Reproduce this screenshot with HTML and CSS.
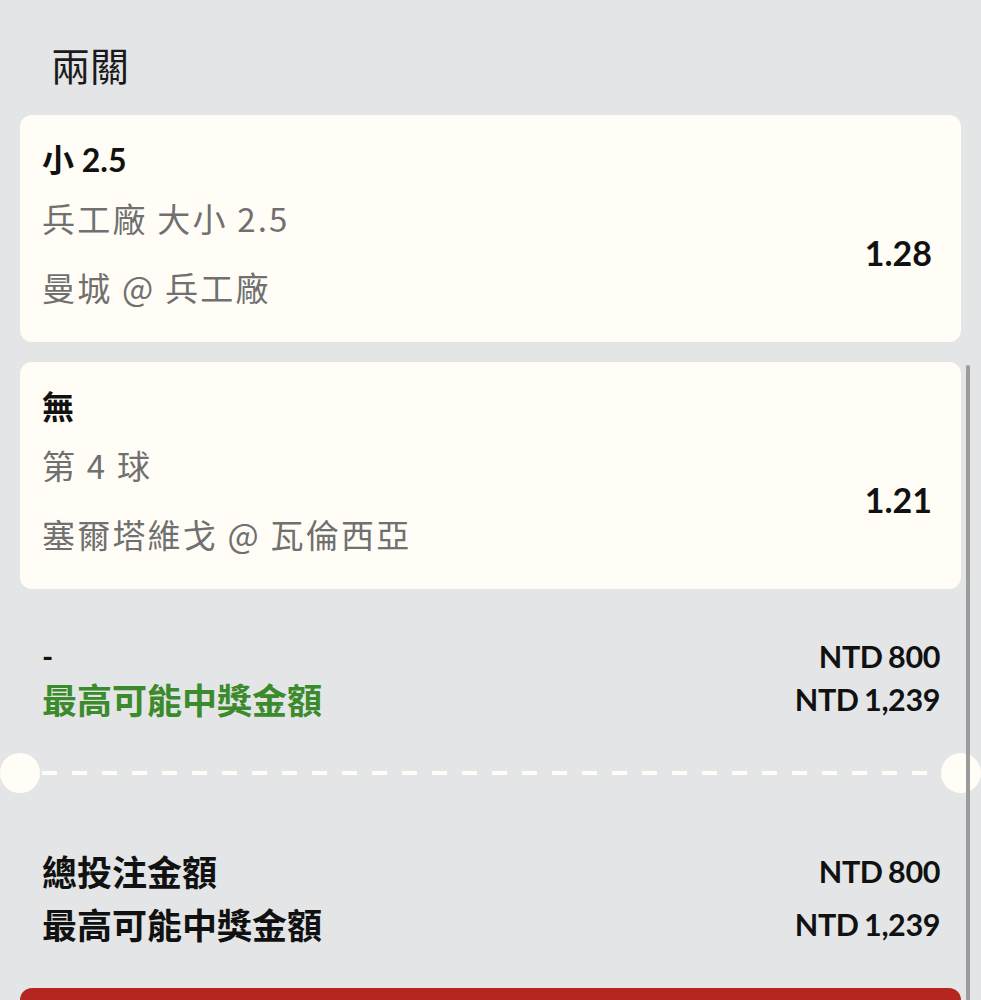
FILE: index.html
```html
<!DOCTYPE html>
<html lang="zh-Hant">
<head>
<meta charset="utf-8">
<title>兩關</title>
<link rel="stylesheet" href="styles.css">
</head>
<body>
<div class="page">
  <h1 class="title">兩關</h1>
  <div class="card">
    <div class="card-title">小 2.5</div>
    <div class="card-body">
      <div class="card-lines">
        <div class="line">兵工廠 大小 2.5</div>
        <div class="line">曼城 @ 兵工廠</div>
      </div>
      <div class="odds">1.28</div>
    </div>
  </div>
  <div class="card">
    <div class="card-title">無</div>
    <div class="card-body">
      <div class="card-lines">
        <div class="line">第 4 球</div>
        <div class="line">塞爾塔維戈 @ 瓦倫西亞</div>
      </div>
      <div class="odds">1.21</div>
    </div>
  </div>
  <div class="summary summary-top">
    <div class="row"><span class="label dash">-</span><span class="amount">NTD 800</span></div>
    <div class="row"><span class="label green">最高可能中獎金額</span><span class="amount">NTD 1,239</span></div>
  </div>
  <div class="divider">
    <span class="notch"></span>
    <span class="dashes"></span>
    <span class="notch"></span>
  </div>
  <div class="summary summary-bottom">
    <div class="row"><span class="label">總投注金額</span><span class="amount">NTD 800</span></div>
    <div class="row"><span class="label">最高可能中獎金額</span><span class="amount">NTD 1,239</span></div>
  </div>
  <div class="button"></div>
</div>
<div class="scrollbar"></div>
</body>
</html>
```
FILE: styles.css
```css
html, body {
  margin: 0;
  padding: 0;
  background: #e4e5e7;
  overflow: hidden;
  height: 1000px;
}
body {
  font-family: "Lato", "Noto Sans CJK TC", sans-serif;
  color: #111;
  position: relative;
}
.page {
  padding: 0 20px;
}
.title {
  margin: 0;
  padding: 36px 0 0 31px;
  font-family: "Noto Sans CJK TC", sans-serif;
  font-weight: 400;
  font-size: 39px;
  line-height: 56px;
  height: 79px;
  color: #1a1a1a;
}
.card {
  background: #fffdf5;
  border-radius: 12px;
  padding: 23px 29px 25px 22px;
}
.card + .card {
  margin-top: 20px;
}
.card-title {
  font-weight: 700;
  font-size: 32px;
  line-height: 44px;
  color: #111;
}
.card-body {
  display: flex;
  align-items: center;
  justify-content: space-between;
  margin-top: 6px;
}
.card-lines {
  display: flex;
  flex-direction: column;
  gap: 9px;
}
.line {
  font-family: "Noto Sans CJK TC", sans-serif;
  font-weight: 400;
  font-size: 33px;
  letter-spacing: 2.2px;
  line-height: 60px;
  color: #707070;
}
.odds {
  font-weight: 700;
  font-size: 34px;
  color: #111;
}
.summary {
  padding: 0 21px 0 22px;
}
.summary-top {
  margin-top: 45px;
}
.summary-top .row {
  height: 43px;
}
.summary-bottom {
  margin-top: 51px;
}
.summary-bottom .row {
  height: 53px;
}
.row {
  display: flex;
  justify-content: space-between;
  align-items: center;
}
.label {
  font-family: "Noto Sans CJK TC", sans-serif;
  font-weight: 700;
  font-size: 35px;
  color: #111;
}
.label.dash {
  font-family: "Lato", sans-serif;
  font-size: 30px;
}
.label.green {
  color: #3b8a2c;
}
.amount {
  font-weight: 700;
  font-size: 30.5px;
  letter-spacing: -0.4px;
  word-spacing: -1.5px;
  color: #111;
}
.divider {
  display: flex;
  align-items: center;
  margin: 33px -20px 0;
  height: 40px;
}
.notch {
  width: 40px;
  height: 40px;
  border-radius: 50%;
  background: #fffdf5;
  flex: none;
}
.dashes {
  flex: 1;
  height: 4px;
  margin: 0 2px;
  background: repeating-linear-gradient(90deg, #fffdf5 0 15px, transparent 15px 30px);
}
.button {
  margin-top: 38px;
  height: 80px;
  background: #b5261e;
  border-radius: 12px;
}
.scrollbar {
  position: absolute;
  left: 966px;
  top: 365px;
  width: 4px;
  height: 700px;
  border-radius: 2px;
  background: #9c9c9c;
}
```
